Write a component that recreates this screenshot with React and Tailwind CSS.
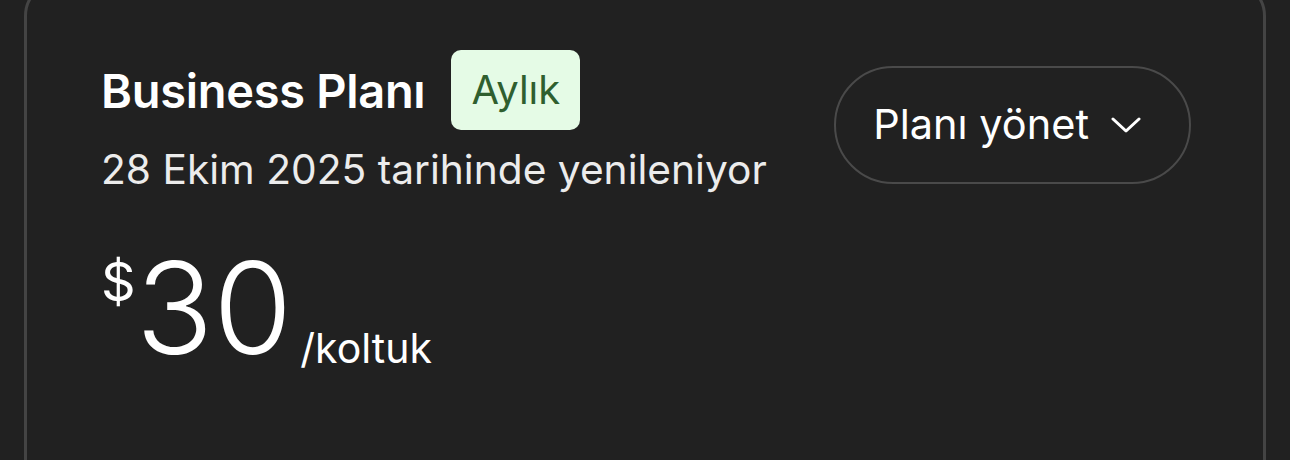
export default function App() {
  return (
    <div className="h-[460px] w-[1290px] overflow-hidden bg-[#212121] font-['Inter',sans-serif] text-white">
      <div className="mx-[24px] -mt-[20px] h-[520px] rounded-[36px] border-[3px] border-[#444444] bg-[#212121] pl-[74px] pr-[72px] pt-[67px]">
        <div className="flex items-start justify-between">
          <div>
            <div className="flex items-center gap-[26px]">
              <h2 className="text-[47px] font-semibold leading-none tracking-[-0.3px]">Business Planı</h2>
              <span className="flex h-[80px] items-center rounded-[10px] bg-[#e5fbe6] px-[20px] text-[40px] leading-none text-[#2f5f2f]">
                Aylık
              </span>
            </div>
            <p className="mt-[20px] text-[40.7px] leading-none text-[#ececec]">28 Ekim 2025 tarihinde yenileniyor</p>
          </div>
          <button className="mt-[16px] flex h-[118px] items-center gap-[22px] rounded-full border-2 border-[#4a4a4a] pl-[37px] pr-[48px] text-[41.5px] leading-none">
            Planı yönet
            <svg width="30" height="18" viewBox="0 0 30 18" fill="none" stroke="currentColor" strokeWidth="3" strokeLinecap="round" strokeLinejoin="round">
              <path d="M2 3 L15 15 L28 3" />
            </svg>
          </button>
        </div>
        <div className="mt-[66px] flex items-end">
          <span className="-mt-[2px] self-start text-[54px] leading-none">$</span>
          <span className="text-[128px] font-light leading-[0.8]">30</span>
          <span className="mb-[-10px] ml-[8px] text-[41px] leading-none">/koltuk</span>
        </div>
      </div>
    </div>
  );
}
